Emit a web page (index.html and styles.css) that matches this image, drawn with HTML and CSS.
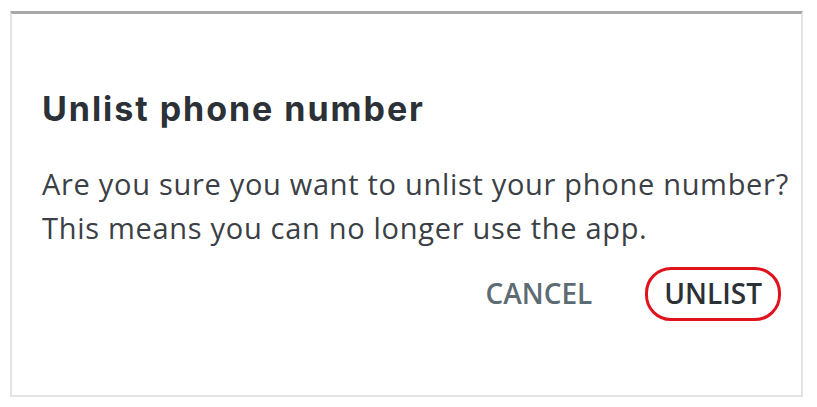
FILE: index.html
```html
<!DOCTYPE html>
<html>
<head>
<meta charset="utf-8">
<link rel="stylesheet" href="styles.css">
</head>
<body>
<div class="dialog">
  <h1 class="title">Unlist phone number</h1>
  <p class="message">Are you sure you want to unlist your phone number?<br>This means you can no longer use the app.</p>
  <div class="actions">
    <button class="btn btn-cancel">CANCEL</button>
    <button class="btn btn-confirm">UNLIST</button>
  </div>
</div>
</body>
</html>
```
FILE: styles.css
```css
html, body {
  margin: 0;
  padding: 0;
  background: #ffffff;
}
.dialog {
  box-sizing: border-box;
  margin: 11px 0 0 10px;
  width: 793px;
  height: 386px;
  border: 2px solid #e4e4e4;
  border-top: 3px solid #a8a8a8;
  padding: 74px 20px 0 30px;
  font-family: "Open Sans", sans-serif;
}
.title {
  margin: 0;
  font-family: "Inter", sans-serif;
  font-weight: 700;
  font-size: 34px;
  line-height: 42px;
  color: #2b3136;
  letter-spacing: 1.95px;
}
.message {
  margin: 32px 0 0 0;
  font-size: 29px;
  line-height: 44px;
  color: #3a4045;
  letter-spacing: 0.7px;
  white-space: nowrap;
}
.actions {
  display: flex;
  justify-content: flex-end;
  align-items: center;
  gap: 50px;
  margin-top: 17px;
}
.btn {
  font-family: "Open Sans", sans-serif;
  font-weight: 600;
  font-size: 28px;
  background: none;
  border: 3px solid transparent;
  border-radius: 26px;
  padding: 4px 16px 6px;
  line-height: 38px;
  cursor: pointer;
}
.btn-cancel {
  color: #5d6b73;
  padding-left: 0;
  padding-right: 0;
}
.btn-confirm {
  color: #2b3136;
  border-color: #e0121c;
}
```
